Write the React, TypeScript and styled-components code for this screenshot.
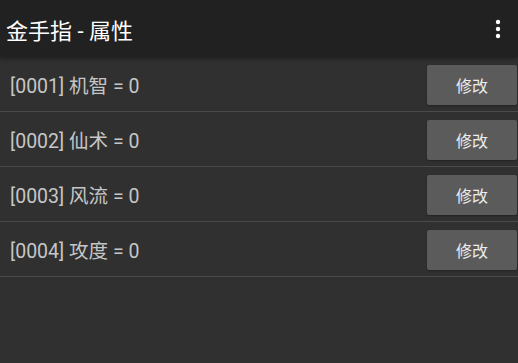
import React from "react";
import styled, { createGlobalStyle } from "styled-components";

const Global = createGlobalStyle`
  html, body { margin: 0; padding: 0; background: #303030; }
  body { font-family: Roboto, "Noto Sans CJK SC", sans-serif; }
`;

const Page = styled.div`
  width: 518px;
  height: 363px;
  background: #303030;
  display: flex;
  flex-direction: column;
  overflow: hidden;
`;

const Toolbar = styled.header`
  height: 57px;
  flex: none;
  background: #212121;
  display: flex;
  align-items: center;
  justify-content: space-between;
  padding: 0 12px 0 6px;
  box-shadow: 0 2px 4px rgba(0, 0, 0, 0.35);
  position: relative;
  z-index: 1;
`;

const Title = styled.h1`
  margin: 0;
  color: #ffffff;
  font-size: 22px;
  font-weight: 400;
  font-family: Roboto, "Noto Sans CJK SC", sans-serif;
`;

const MenuButton = styled.button`
  border: 0;
  background: transparent;
  padding: 0;
  width: 16px;
  height: 24px;
  display: flex;
  align-items: center;
  justify-content: center;
`;

const List = styled.div`
  display: flex;
  flex-direction: column;
`;

const Row = styled.div`
  height: 54px;
  border-bottom: 1px solid #4a4a4a;
  display: flex;
  align-items: center;
  justify-content: space-between;
  padding: 0 1px 0 10px;
`;

const Label = styled.span`
  color: #c6c6c6;
  font-size: 19.5px;
  font-family: Roboto, "Noto Sans CJK SC", sans-serif;
`;

const EditButton = styled.button`
  width: 90px;
  height: 40px;
  margin-top: 1px;
  border: 0;
  border-radius: 2px;
  background: #5b5b5b;
  color: #ececec;
  font-size: 16px;
  font-family: Roboto, "Noto Sans CJK SC", sans-serif;
  box-shadow: 0 1px 2px rgba(0, 0, 0, 0.3);
`;

const items = [
  { id: "0001", name: "机智", value: 0 },
  { id: "0002", name: "仙术", value: 0 },
  { id: "0003", name: "风流", value: 0 },
  { id: "0004", name: "攻度", value: 0 },
];

export default function App() {
  return (
    <Page>
      <Global />
      <Toolbar>
        <Title>金手指 - 属性</Title>
        <MenuButton aria-label="more">
          <svg width="6" height="20" viewBox="0 0 6 20">
            <circle cx="3" cy="3" r="2.2" fill="#fff" />
            <circle cx="3" cy="10" r="2.2" fill="#fff" />
            <circle cx="3" cy="17" r="2.2" fill="#fff" />
          </svg>
        </MenuButton>
      </Toolbar>
      <List>
        {items.map((it) => (
          <Row key={it.id}>
            <Label>
              [{it.id}] {it.name} = {it.value}
            </Label>
            <EditButton>修改</EditButton>
          </Row>
        ))}
      </List>
    </Page>
  );
}
